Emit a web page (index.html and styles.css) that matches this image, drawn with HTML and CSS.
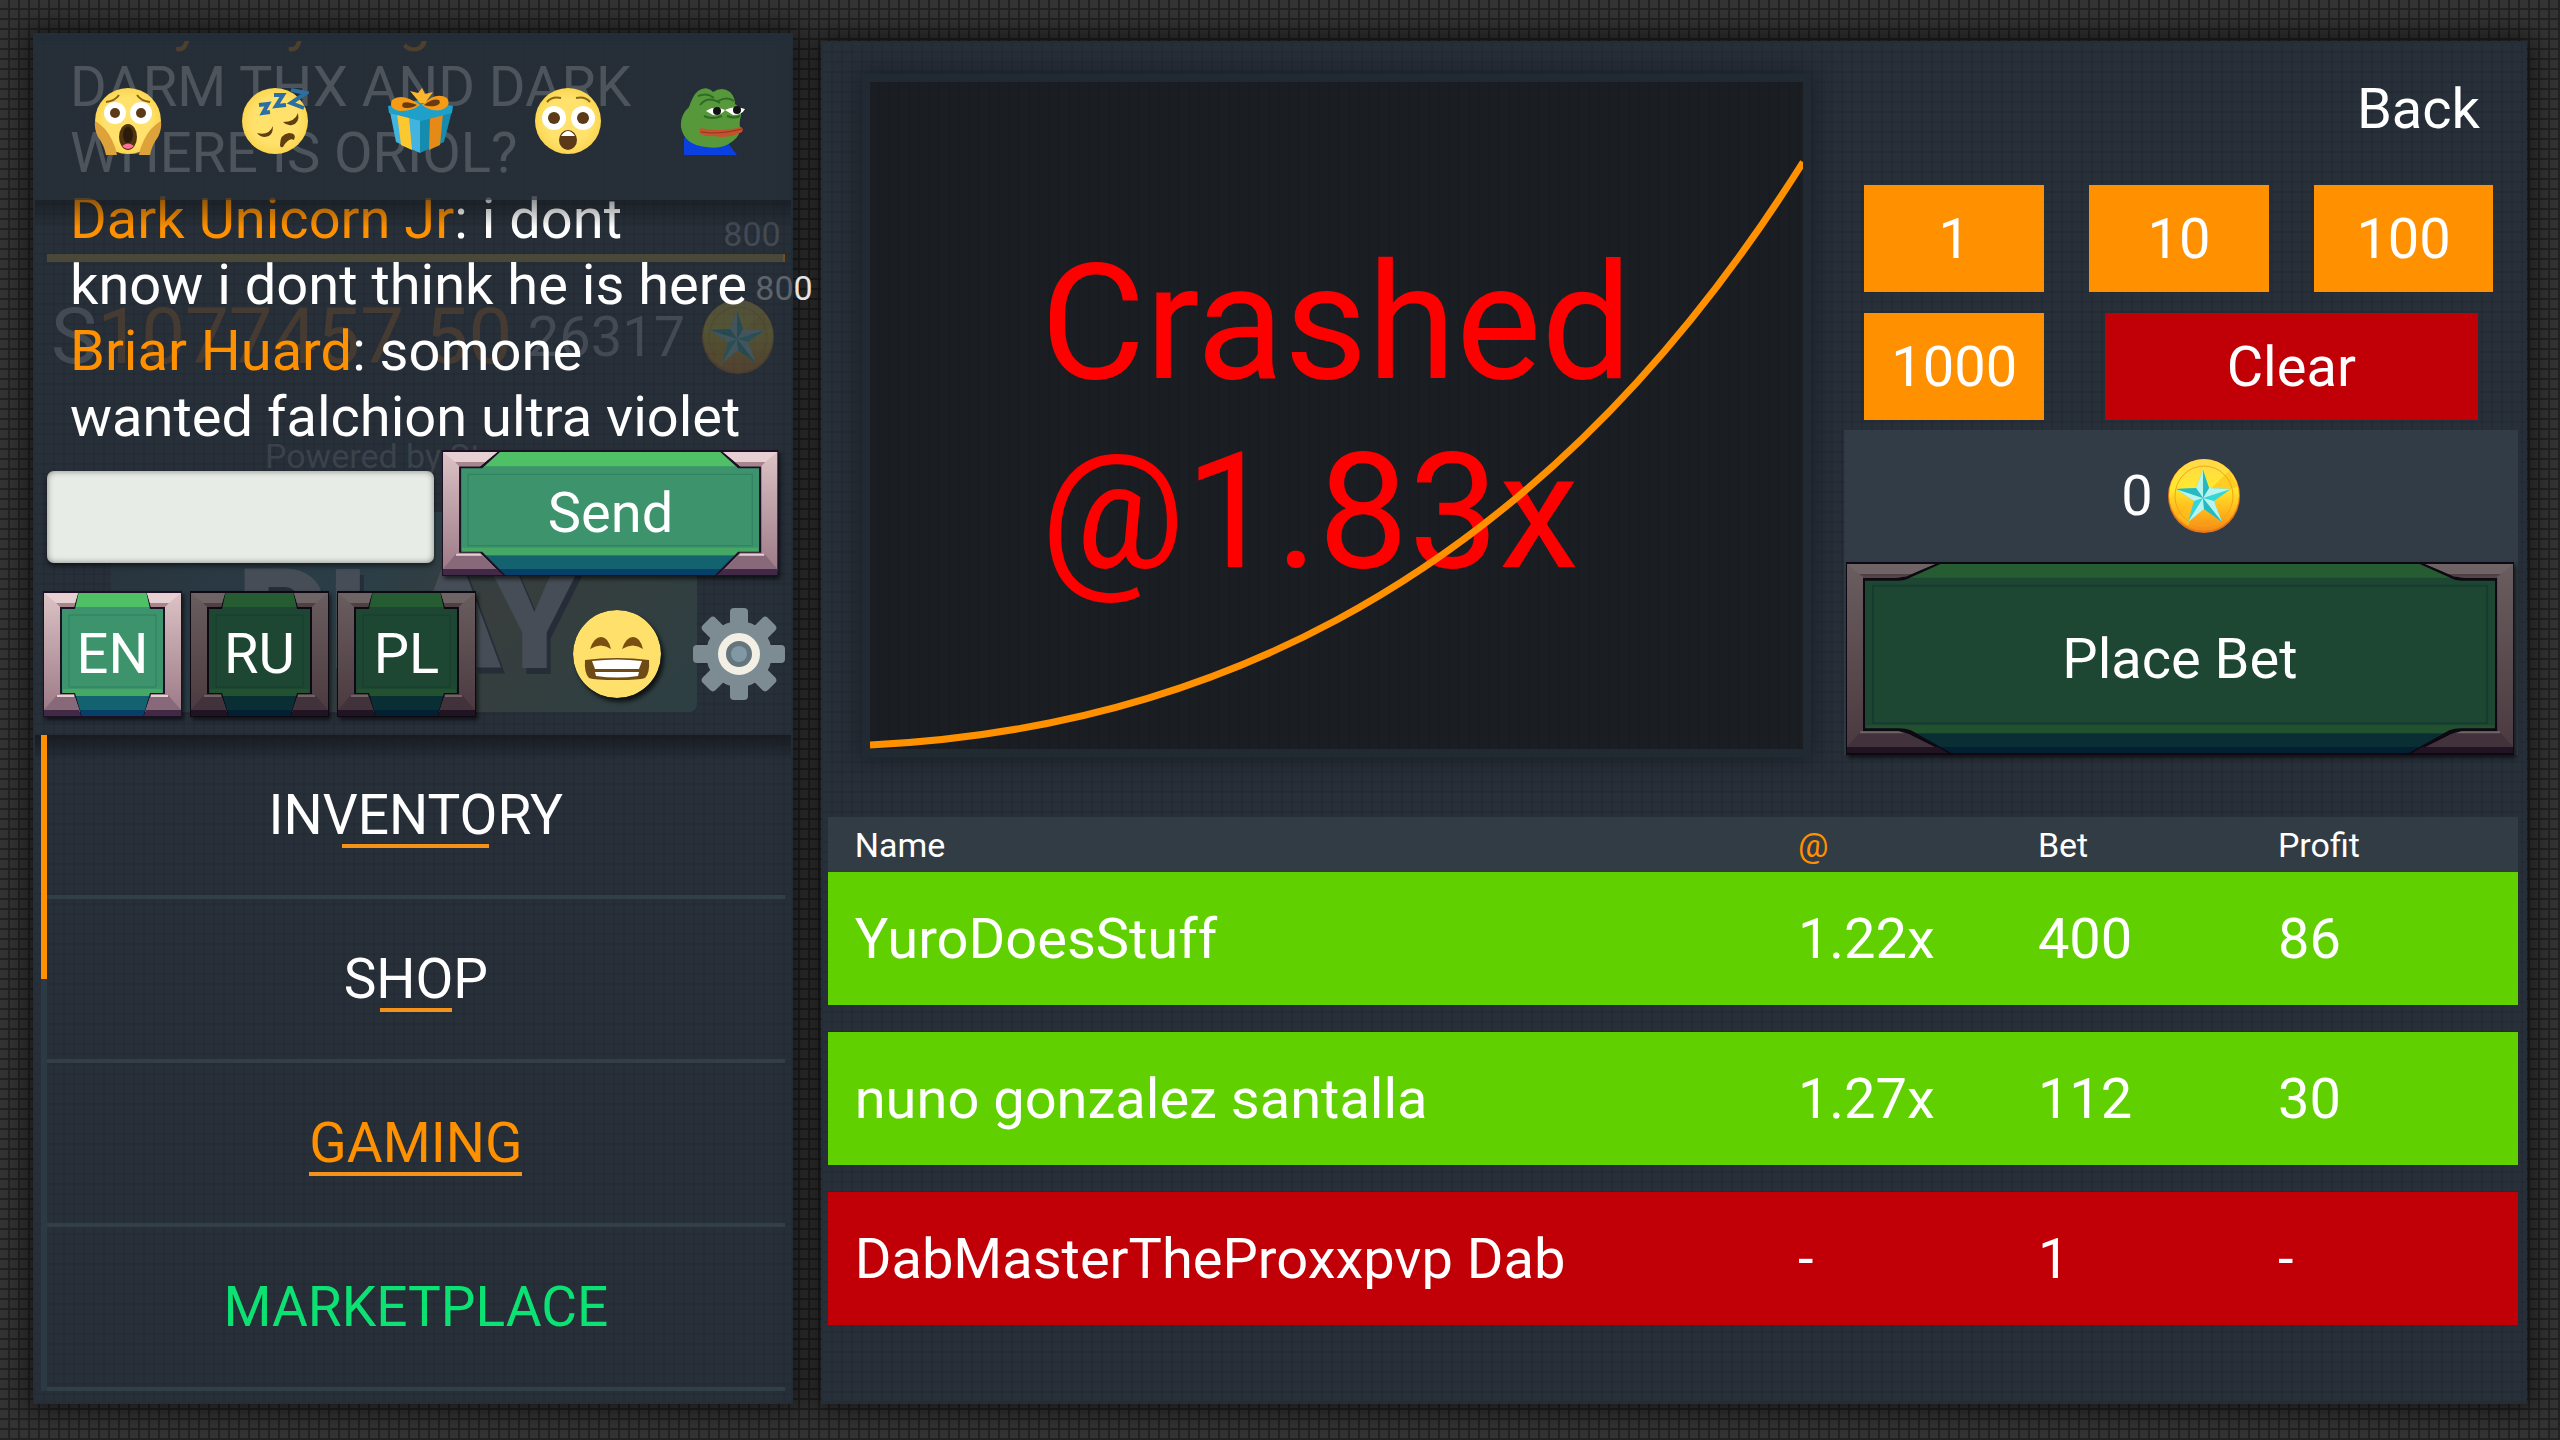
FILE: index.html
```html
<!DOCTYPE html>
<html lang="en">
<head>
  <meta charset="UTF-8">
  <title>Crash</title>
  <meta name="viewport" content="width=device-width, initial-scale=1.0">
  <link rel="stylesheet" href="styles.css">
</head>
<body>
  <!-- Shared drawings -->
  <svg class="defs" width="0" height="0" aria-hidden="true">
    <defs>
      <linearGradient id="side" x1="0" y1="0" x2="0" y2="1">
        <stop offset="0" stop-color="#dcc2c5"/><stop offset="1" stop-color="#9c7a86"/>
      </linearGradient>
      <linearGradient id="gold" x1="0" y1="0" x2="0" y2="1">
        <stop offset="0" stop-color="#ffd84a"/><stop offset=".4" stop-color="#ffe92e"/><stop offset=".75" stop-color="#ffb319"/><stop offset="1" stop-color="#f58a16"/>
      </linearGradient>
      <radialGradient id="face" cx=".5" cy=".5" r=".5">
        <stop offset=".7" stop-color="#ffe16b"/><stop offset="1" stop-color="#fbd650"/>
      </radialGradient>
    </defs>

    <symbol id="frame-small" viewBox="0 0 139 126" preserveAspectRatio="none">
      <rect width="139" height="126" rx="4" fill="#1b1026"/>
      <path d="M2 2h135v16H2z" fill="#50c067"/>
      <path d="M19 16h101v87H19z" fill="#3d936b"/>
      <path d="M26 24h87v72H26z" fill="none" stroke="#2c7f62" stroke-width="1"/>
      <path d="M20 98h99v8H20z" fill="#46a865"/>
      <path d="M20 105h99v15H20z" fill="#13626f"/>
      <path d="M20 119h99v6H20z" fill="#064069"/>
      <g id="corner-small">
        <path d="M0 0h36l-4 18H19v84h13l7 24H0z" fill="#1b1026"/>
        <path d="M1 2h34l-4 14H17v87h14l6 18H1z" fill="url(#side)"/>
        <path d="M1 2h34l-3 10H13z" fill="#e6d0d2"/>
        <path d="M13 12h19l-1 4H17z" fill="#a8858c"/>
        <path d="M1 119l13-15h17l5 15z" fill="#87697a"/>
        <path d="M14 104h17v2H14z" fill="#e6d0d2"/>
        <path d="M1 119h35l2 6H1z" fill="#422a47"/>
      </g>
      <use href="#corner-small" transform="translate(139 0) scale(-1 1)"/>
    </symbol>

    <symbol id="frame-wide" viewBox="0 0 335 125" preserveAspectRatio="none">
      <rect width="335" height="125" rx="4" fill="#1b1026"/>
      <path d="M2 2h331v16H2z" fill="#50c067"/>
      <path d="M19 16h297v87H19z" fill="#3d936b"/>
      <path d="M26 24h283v71H26z" fill="none" stroke="#2c7f62" stroke-width="1"/>
      <path d="M20 97h295v8H20z" fill="#46a865"/>
      <path d="M20 105h295v15H20z" fill="#13626f"/>
      <path d="M20 118h295v6H20z" fill="#064069"/>
      <g id="corner-wide">
        <path d="M0 0h60l-20 18H19v83h21l24 24H0z" fill="#1b1026"/>
        <path d="M1 2h54l-17 14H17v86h21l18 18H1z" fill="url(#side)"/>
        <path d="M1 2h54l-12 10H13z" fill="#e6d0d2"/>
        <path d="M13 12h30l-5 4H17z" fill="#a8858c"/>
        <path d="M1 118l13-15h24l15 15z" fill="#87697a"/>
        <path d="M14 103h24l2 2H14z" fill="#e6d0d2"/>
        <path d="M1 118h53l7 6H1z" fill="#422a47"/>
      </g>
      <use href="#corner-wide" transform="translate(335 0) scale(-1 1)"/>
    </symbol>

    <symbol id="frame-big" viewBox="0 0 669 195" preserveAspectRatio="none">
      <rect width="669" height="195" rx="4" fill="#1b1026"/>
      <path d="M2 2h665v15H2z" fill="#50c067"/>
      <path d="M19 16h631v156H19z" fill="#3d936b"/>
      <path d="M27 24h615v139H27z" fill="none" stroke="#2c7f62" stroke-width="2"/>
      <path d="M20 165h629v9H20z" fill="#46a865"/>
      <path d="M20 173h629v15H20z" fill="#13626f"/>
      <path d="M20 187h629v6H20z" fill="#064069"/>
      <g id="corner-big">
        <path d="M0 0h99L64 16q-5 3-12 3H19v149h34q7 0 12 2l44 25H0z" fill="#1b1026"/>
        <path d="M1 2h88L60 14q-5 2-10 2H17v155h34q6 0 12 3l25 13H1z" fill="url(#side)"/>
        <path d="M1 2h88L66 12H13z" fill="#e6d0d2"/>
        <path d="M13 12h53l-6 3H17z" fill="#a8858c"/>
        <path d="M1 187l13-15h39q6 0 10 2l26 13z" fill="#87697a"/>
        <path d="M14 171h39l5 2H14z" fill="#e6d0d2"/>
        <path d="M1 187h91l10 6H1z" fill="#422a47"/>
      </g>
      <use href="#corner-big" transform="translate(669 0) scale(-1 1)"/>
    </symbol>

    <symbol id="coin" viewBox="0 0 74 76">
      <ellipse cx="37" cy="38" rx="36" ry="37" fill="#e8771a"/>
      <ellipse cx="37" cy="37" rx="35" ry="36" fill="url(#gold)"/>
      <path d="M37 37L62 13l9 16zM37 37L10 58l11 10z" fill="#ffc21d" opacity=".7"/>
      <ellipse cx="37" cy="38" rx="29" ry="30" fill="none" stroke="#f2a51b" stroke-width="1"/>
      <path d="M36 12l6 18 22 1-17 12 8 21-18-13-16 13 6-21L9 31l20-1z" fill="#35d5d8"/>
      <path d="M36 12v28l-7-10zM9 31l27 9-9 3zM21 64l15-24 1 11zM55 64L36 40l11 3zM64 31l-28 9 6-10z" fill="#b8f3ee"/>
      <path d="M36 12l6 18-6 10zM9 31l20-1 7 10zM36 40l1 11 18 13z" fill="#22afbb" opacity=".75"/>
    </symbol>
  </svg>

  <div class="page">
    <aside class="sidebar">
      <section class="chat">
        <!-- Profile card showing through the chat window -->
        <div class="backdrop" aria-hidden="true">
          <div class="xp">800</div>
          <div class="xp-bar"></div>
          <div class="xp xp-next">80<span>0</span></div>
          <div class="wallet">
            <div class="cash"><span>S</span>1077457.50</div>
            <div class="coins">26317</div>
            <svg class="coin"><use href="#coin"/></svg>
          </div>
          <div class="powered">Powered by St</div>
          <div class="play">PLAY</div>
        </div>

        <div class="messages">
          <div class="old"><b>y</b><b>y</b><b>g</b></div>
          <p>DARM THX AND DARK<br>WHERE IS ORIOL?</p>
          <p><b>Dark Unicorn Jr</b>: i dont<br>know i dont think he is here</p>
          <p><b>Briar Huard</b>: somone<br>wanted falchion ultra violet</p>
        </div>

        <div class="emoji-bar">
          <button type="button" aria-label="Scream">
            <svg viewBox="0 0 68 68">
              <circle cx="34" cy="34" r="33" fill="url(#face)"/>
              <path d="M1 34Q12 40 18 53q4 8 5 15H12Q10 58 4 50 0 42 1 34zM67 34Q56 40 50 53q-4 8-5 15h11q2-10 8-18 4-8 3-16z" fill="#dea23a"/>
              <circle cx="21" cy="26" r="11" fill="#fff"/><circle cx="47" cy="26" r="11" fill="#fff"/>
              <circle cx="21" cy="26" r="5" fill="#5c3a17"/><circle cx="47" cy="26" r="5" fill="#5c3a17"/>
              <path d="M12 15q9-1 13-7M56 15q-9-1-13-7" fill="none" stroke="#8a6416" stroke-width="2"/>
              <ellipse cx="34" cy="50" rx="9" ry="13" fill="#50340f"/>
              <ellipse cx="34" cy="48" rx="5" ry="8" fill="#2c1b0b"/>
              <path d="M28 59q6-5 12 0-6 6-12 0z" fill="#ff6f96"/>
            </svg>
          </button>
          <button type="button" aria-label="Sleeping">
            <svg viewBox="0 0 68 68">
              <circle cx="34" cy="34" r="33" fill="url(#face)"/>
              <path d="M16 46q12 3 16-7 0 11-8 11-5 0-8-4zM42 35q12 0 15-9 2 10-6 12-5 1-9-3z" fill="#614010"/>
              <path d="M39 58q0-11 9-12 8 0 5 7-5-3-11 7-3 1-3-2z" fill="#614010"/>
              <path d="M18 18l9-1-5 9 7-1M33 8h9l-7 11 10-1M50 3l15 3-15 10 13 5" fill="none" stroke="#2b6fa3" stroke-width="4"/>
            </svg>
          </button>
          <button type="button" aria-label="Gift">
            <svg viewBox="0 0 68 68">
              <path d="M3 25l30 8v33L9 55z" fill="#43b4e0"/>
              <path d="M65 24l-32 9v33l24-11z" fill="#168bb0"/>
              <path d="M10 26l12 4 3 33-11-5z" fill="#fcc830"/>
              <path d="M56 26l-13 4-1 33 11-5z" fill="#e58a16"/>
              <path d="M1 19l31-6 34 6-1 7-31 8-32-8z" fill="#1ea0ca"/>
              <path d="M33 18Q15 5 5 13q-4 9 8 11 12 0 20-6zM35 18Q49 4 60 11q5 8-6 12-10 2-19-5z" fill="#f59b16"/>
              <path d="M30 18q-10-4-14-2-3 5 4 5 6 0 10-3zM37 18q9-7 15-5 3 4-4 6-6 1-11-1z" fill="#6b3a12"/>
              <path d="M33 16L23 4l8 2 4-5 3 6 8-2-8 11z" fill="#fdb52b"/>
            </svg>
          </button>
          <button type="button" aria-label="Astonished">
            <svg viewBox="0 0 68 68">
              <circle cx="34" cy="34" r="33" fill="url(#face)"/>
              <circle cx="20" cy="31" r="12" fill="#fff"/><circle cx="49" cy="31" r="12" fill="#fff"/>
              <circle cx="20" cy="31" r="6" fill="#5c3a17"/><circle cx="49" cy="31" r="6" fill="#5c3a17"/>
              <path d="M13 15q5-6 14-4M56 15q-5-6-14-4" fill="none" stroke="#8a6416" stroke-width="2"/>
              <ellipse cx="34" cy="53" rx="9" ry="10" fill="#5c3a17"/>
              <path d="M27 49q7-10 14 0z" fill="#fff"/>
            </svg>
          </button>
          <button type="button" aria-label="Pepe">
            <svg viewBox="0 0 68 68">
              <path d="M4 51l43 4 10 13H4z" fill="#0a3fe0"/>
              <path d="M1 40Q0 28 9 20 13 8 18 4q8-6 15 1 9-6 17 0 5 5 5 12 7 4 6 12-2 5-1 11 1 8-7 14Q42 63 26 60 4 58 1 40z" fill="#57993a"/>
              <path d="M20 18q8-10 20-2M38 14q9-5 16 0M18 9q9-4 16 2" fill="none" stroke="#2f6a26" stroke-width="2"/>
              <path d="M26 24q8-6 19-1-4 6-12 5zM45 23q9-5 20-1-3 6-12 6z" fill="#fff"/>
              <circle cx="37" cy="24" r="4" fill="#111"/><circle cx="57" cy="23" r="4" fill="#111"/>
              <path d="M24 29q8 4 18 0M47 29q7 3 13 0" fill="none" stroke="#2f6a26" stroke-width="2"/>
              <path d="M21 41q7 2 16 2 14 0 24-3 3 2 1 5-13 7-28 4-13 1-15-4 0-3 2-4z" fill="#c4522d"/>
              <path d="M21 45q18 3 41-3" fill="none" stroke="#8c3420" stroke-width="1"/>
            </svg>
          </button>
        </div>

        <form class="send-row" onsubmit="return false">
          <input type="text" aria-label="Message">
          <button type="submit" class="framed send">
            <svg class="frame"><use href="#frame-wide"/></svg>
            <span>Send</span>
          </button>
        </form>

        <div class="lang-row">
          <button type="button" class="framed lang"><svg class="frame"><use href="#frame-small"/></svg><span>EN</span></button>
          <button type="button" class="framed lang dim"><svg class="frame"><use href="#frame-small"/></svg><span>RU</span></button>
          <button type="button" class="framed lang dim"><svg class="frame"><use href="#frame-small"/></svg><span>PL</span></button>
          <button type="button" class="icon grin" aria-label="Emojis">
            <svg viewBox="0 0 88 88">
              <circle cx="44" cy="44" r="44" fill="#ffe06a"/>
              <path d="M17 39Q21 27 28 27t10 12q-10-7-21 0zM49 39q4-12 11-12t10 12q-10-7-21 0z" fill="#7a5010"/>
              <path d="M12 50q32-4 64 0 1 13-4 18-6 2-28 2t-28-2q-5-5-4-18z" fill="#6e4a14"/>
              <path d="M19 51q25-3 50 0l-3 8H22zM22 62h44l-1 4q-21 3-42 0z" fill="#fff"/>
            </svg>
          </button>
          <button type="button" class="icon" aria-label="Settings">
            <svg viewBox="-46 -46 92 92">
              <g fill="#7d8c93">
                <circle r="33"/>
                <rect id="tooth" x="-9" y="-46" width="18" height="92" rx="4"/>
                <use href="#tooth" transform="rotate(45)"/>
                <use href="#tooth" transform="rotate(90)"/>
                <use href="#tooth" transform="rotate(135)"/>
              </g>
              <circle r="17" fill="#64757e" stroke="#f3efe4" stroke-width="8"/>
              <circle r="8" fill="#8198a5"/>
            </svg>
          </button>
        </div>
      </section>

      <nav class="menu">
        <a href="#inventory"><span>INVENTORY</span></a>
        <a href="#shop"><span>SHOP</span></a>
        <a href="#gaming" class="active"><span>GAMING</span></a>
        <a href="#marketplace" class="market"><span>MARKETPLACE</span></a>
      </nav>
    </aside>

    <main class="game">
      <div class="top">
        <div class="chart">
          <svg class="curve" viewBox="0 0 933 667" preserveAspectRatio="none">
            <path d="M0 663C288 649 645 538 933 80" fill="none" stroke="#ff9000" stroke-width="7"/>
          </svg>
          <div class="result">Crashed<br>@1.83x</div>
        </div>

        <div class="controls">
          <a href="#back" class="back">Back</a>
          <div class="chips">
            <button type="button">1</button>
            <button type="button">10</button>
            <button type="button">100</button>
            <button type="button">1000</button>
            <button type="button" class="clear">Clear</button>
          </div>
          <div class="bet">
            <div class="amount">0 <svg class="coin"><use href="#coin"/></svg></div>
            <button type="button" class="framed place dim">
              <svg class="frame"><use href="#frame-big"/></svg>
              <span>Place Bet</span>
            </button>
          </div>
        </div>
      </div>

      <table>
        <thead>
          <tr><th class="name">Name</th><th class="at">@</th><th>Bet</th><th class="profit">Profit</th></tr>
        </thead>
        <tbody>
          <tr class="win"><td>YuroDoesStuff</td><td>1.22x</td><td>400</td><td>86</td></tr>
          <tr class="win"><td>nuno gonzalez santalla</td><td>1.27x</td><td>112</td><td>30</td></tr>
          <tr class="lose"><td>DabMasterTheProxxpvp Dab</td><td>-</td><td>1</td><td>-</td></tr>
        </tbody>
      </table>
    </main>
  </div>
</body>
</html>
```
FILE: styles.css
```css
* {
  box-sizing: border-box;
}
body {
  margin: 0;
  font-family: Roboto, sans-serif;
  font-size: 56px;
  line-height: 66px;
  color: #fff;
  background:
    repeating-linear-gradient(90deg, transparent 0 8px, #222 8px 10px),
    repeating-linear-gradient(transparent 0 8px, #222 8px 10px),
    #343434;
}
button {
  font: inherit;
  color: inherit;
  border: none;
  padding: 0;
  background: none;
  cursor: pointer;
}
a {
  color: inherit;
  text-decoration: none;
}
svg {
  display: block;
}
.defs {
  position: absolute;
}
.page {
  display: grid;
  grid-template-columns: 760fr 1707fr;
  gap: 28px;
  min-height: 100vh;
  padding: 33px 33px 36px;
}
.sidebar, .game {
  background:
    repeating-linear-gradient(90deg, transparent 0 8px, rgba(0,0,0,0.06) 8px 10px),
    repeating-linear-gradient(transparent 0 8px, rgba(0,0,0,0.06) 8px 10px),
    #272f38;
  border: 2px solid #232e39;
  box-shadow: 0 0 26px 6px rgba(0,0,0,0.6);
}
.sidebar {
  padding: 6px;
  min-width: 0;
}

/* Chat */
.chat {
  position: relative;
  height: 694px;
}
.chat::after {
  content: "";
  position: absolute;
  left: -6px;
  right: -6px;
  bottom: -26px;
  height: 26px;
  background: linear-gradient(rgba(14,16,20,0.6), transparent);
}
.messages {
  position: relative;
  height: 409px;
  padding-left: 29px;
  overflow: hidden;
  display: flex;
  flex-direction: column;
  justify-content: flex-end;
  white-space: nowrap;
}
.messages p {
  margin: 0;
}
.messages b {
  font-weight: normal;
  color: #ff9000;
}
.old {
  display: flex;
  gap: 86px;
  padding-left: 104px;
}
.emoji-bar {
  position: absolute;
  top: -6px;
  left: -6px;
  right: -6px;
  height: 165px;
  padding: 0 3px 0 20px;
  display: flex;
  justify-content: space-around;
  align-items: center;
  background: rgba(38,46,55,0.82);
  border-top: 6px solid #232d37;
}
.emoji-bar::after {
  content: "";
  position: absolute;
  left: 0;
  right: 0;
  top: 100%;
  height: 28px;
  background: linear-gradient(rgba(14,16,20,0.45), transparent);
}
.emoji-bar svg {
  width: 68px;
  height: 68px;
}
.send-row {
  position: relative;
  display: grid;
  grid-template-columns: 387fr 336fr;
  align-items: center;
  gap: 8px;
  padding: 0 6px;
}
.send-row input {
  width: 100%;
  height: 92px;
  margin-top: 8px;
  padding: 0 16px;
  font: inherit;
  border: none;
  border-radius: 7px;
  background: #e7ece6;
  box-shadow: inset 0 0 6px rgba(0,0,0,0.45), 0 3px 5px rgba(0,0,0,0.5);
}
.framed {
  position: relative;
  display: flex;
  align-items: center;
  justify-content: center;
}
.framed span {
  position: relative;
}
.frame {
  position: absolute;
  inset: 0;
  width: 100%;
  height: 100%;
  filter: drop-shadow(2px 3px 2px rgba(0,0,0,0.6));
}
.dim .frame {
  filter: brightness(0.48) drop-shadow(2px 3px 2px rgba(0,0,0,0.6));
}
.send {
  height: 126px;
}
.lang-row {
  position: relative;
  display: flex;
  align-items: center;
  gap: 8px;
  margin-top: 15px;
  padding-left: 2px;
}
.lang {
  width: 139px;
  height: 126px;
}
.icon svg {
  width: 92px;
  height: 92px;
}
.grin {
  margin-left: auto;
  margin-right: 24px;
}
.grin svg {
  width: 88px;
  height: 88px;
  border-radius: 50%;
  box-shadow: 3px 4px 4px rgba(0,0,0,0.7);
}

/* Profile card behind the chat */
.backdrop {
  position: absolute;
  inset: 0;
  padding-left: 6px;
  color: #434a53;
}
.xp {
  margin-top: 173px;
  padding-right: 4px;
  text-align: right;
  font-size: 34px;
  line-height: 40px;
}
.xp-bar {
  height: 8px;
  background: #4a4937;
  border-right: 2px solid #6e501e;
}
.xp-next {
  margin: 6px -28px 0 0;
  padding: 0;
  color: #5d636a;
}
.xp-next span {
  color: #e4e4e4;
}
.wallet {
  display: flex;
  align-items: center;
  justify-content: space-between;
  margin-top: -16px;
  padding: 0 10px 0 4px;
}
.cash {
  font-size: 78px;
  line-height: 90px;
  color: #453b33;
}
.cash span {
  color: #434a53;
}
.wallet .coin {
  opacity: 0.2;
}
.coin {
  width: 74px;
  height: 76px;
}
.powered {
  margin-top: 54px;
  padding-left: 218px;
  font-size: 34px;
  line-height: 40px;
  color: #3b424b;
}
.play {
  margin: 36px 88px 0 64px;
  height: 200px;
  border-radius: 8px;
  padding: 28px 0 0 126px;
  font-size: 140px;
  line-height: 160px;
  font-weight: 900;
  color: #464d56;
  background: linear-gradient(135deg, #28323b, #2b3e48 40%, #383e3d 60%, #2c3f43);
  text-shadow: 4px 6px 0 #252e38;
}

/* Menu */
.menu {
  display: flex;
  flex-direction: column;
  position: relative;
  font-size: 55px;
  border-left: 6px solid #2c3a45;
}
.menu::before {
  content: "";
  position: absolute;
  left: -6px;
  top: 0;
  width: 6px;
  height: 244px;
  background: #ff9000;
}
.menu a {
  height: 164px;
  display: flex;
  align-items: center;
  justify-content: center;
  border-bottom: 4px solid #323e48;
}
.menu span {
  position: relative;
}
.menu span::after {
  content: "";
  position: absolute;
  left: 25%;
  bottom: 0;
  width: 50%;
  height: 4px;
  background: #f59219;
}
.menu .active {
  color: #ff9000;
}
.menu .active span::after {
  left: 0;
  width: 100%;
}
.menu .market {
  color: #0ce273;
}
.menu .market span::after {
  display: none;
}

/* Game */
.game {
  margin-top: 8px;
  padding: 31px 7px 0 5px;
}
.top {
  display: grid;
  grid-template-columns: 949fr 674fr;
  gap: 33px;
  padding-left: 34px;
}
.chart {
  position: relative;
  height: 683px;
  padding-top: 4px;
  display: flex;
  align-items: center;
  justify-content: center;
  border: 8px solid #212a33;
  background:
    repeating-linear-gradient(90deg, transparent 0 8px, rgba(0,0,0,0.06) 8px 10px),
    #1a1d21;
  box-shadow: 0 0 22px 2px rgba(20,20,28,0.6);
}
.result {
  font-size: 161px;
  line-height: 189px;
  color: #ff0000;
}
.curve {
  position: absolute;
  inset: 0;
  width: 100%;
  height: 100%;
}
.back {
  display: block;
  margin: 2px 38px 43px 0;
  text-align: right;
}
.chips {
  display: grid;
  grid-template-columns: repeat(3, 1fr);
  row-gap: 21px;
  justify-items: center;
  margin: 0 2px 10px -2px;
}
.chips button {
  width: 80%;
  height: 107px;
  background: #ff9000;
}
.chips .clear {
  grid-column: span 2;
  width: 83%;
  background: #c00006;
}
.bet {
  background: #323c46;
}
.amount {
  height: 132px;
  display: flex;
  align-items: center;
  justify-content: center;
  gap: 14px;
}
.bet .place {
  width: calc(100% - 6px);
  height: 193px;
  margin: 0 auto 0 2px;
}

table {
  width: 100%;
  margin-top: 60px;
  border-collapse: separate;
  border-spacing: 0;
  table-layout: fixed;
}
th {
  width: 14.2%;
  height: 55px;
  padding: 0 27px;
  font-size: 34px;
  line-height: 40px;
  font-weight: normal;
  text-align: left;
  background: #323c45;
}
.name {
  width: 55.8%;
}
.profit {
  width: 15.8%;
}
.at {
  color: #ff9000;
}
td {
  height: 160px;
  padding: 0 27px;
  border-bottom: 27px solid transparent;
  background-clip: padding-box;
}
.win td {
  background-color: #60d000;
}
.lose td {
  background-color: #c00006;
}
```
